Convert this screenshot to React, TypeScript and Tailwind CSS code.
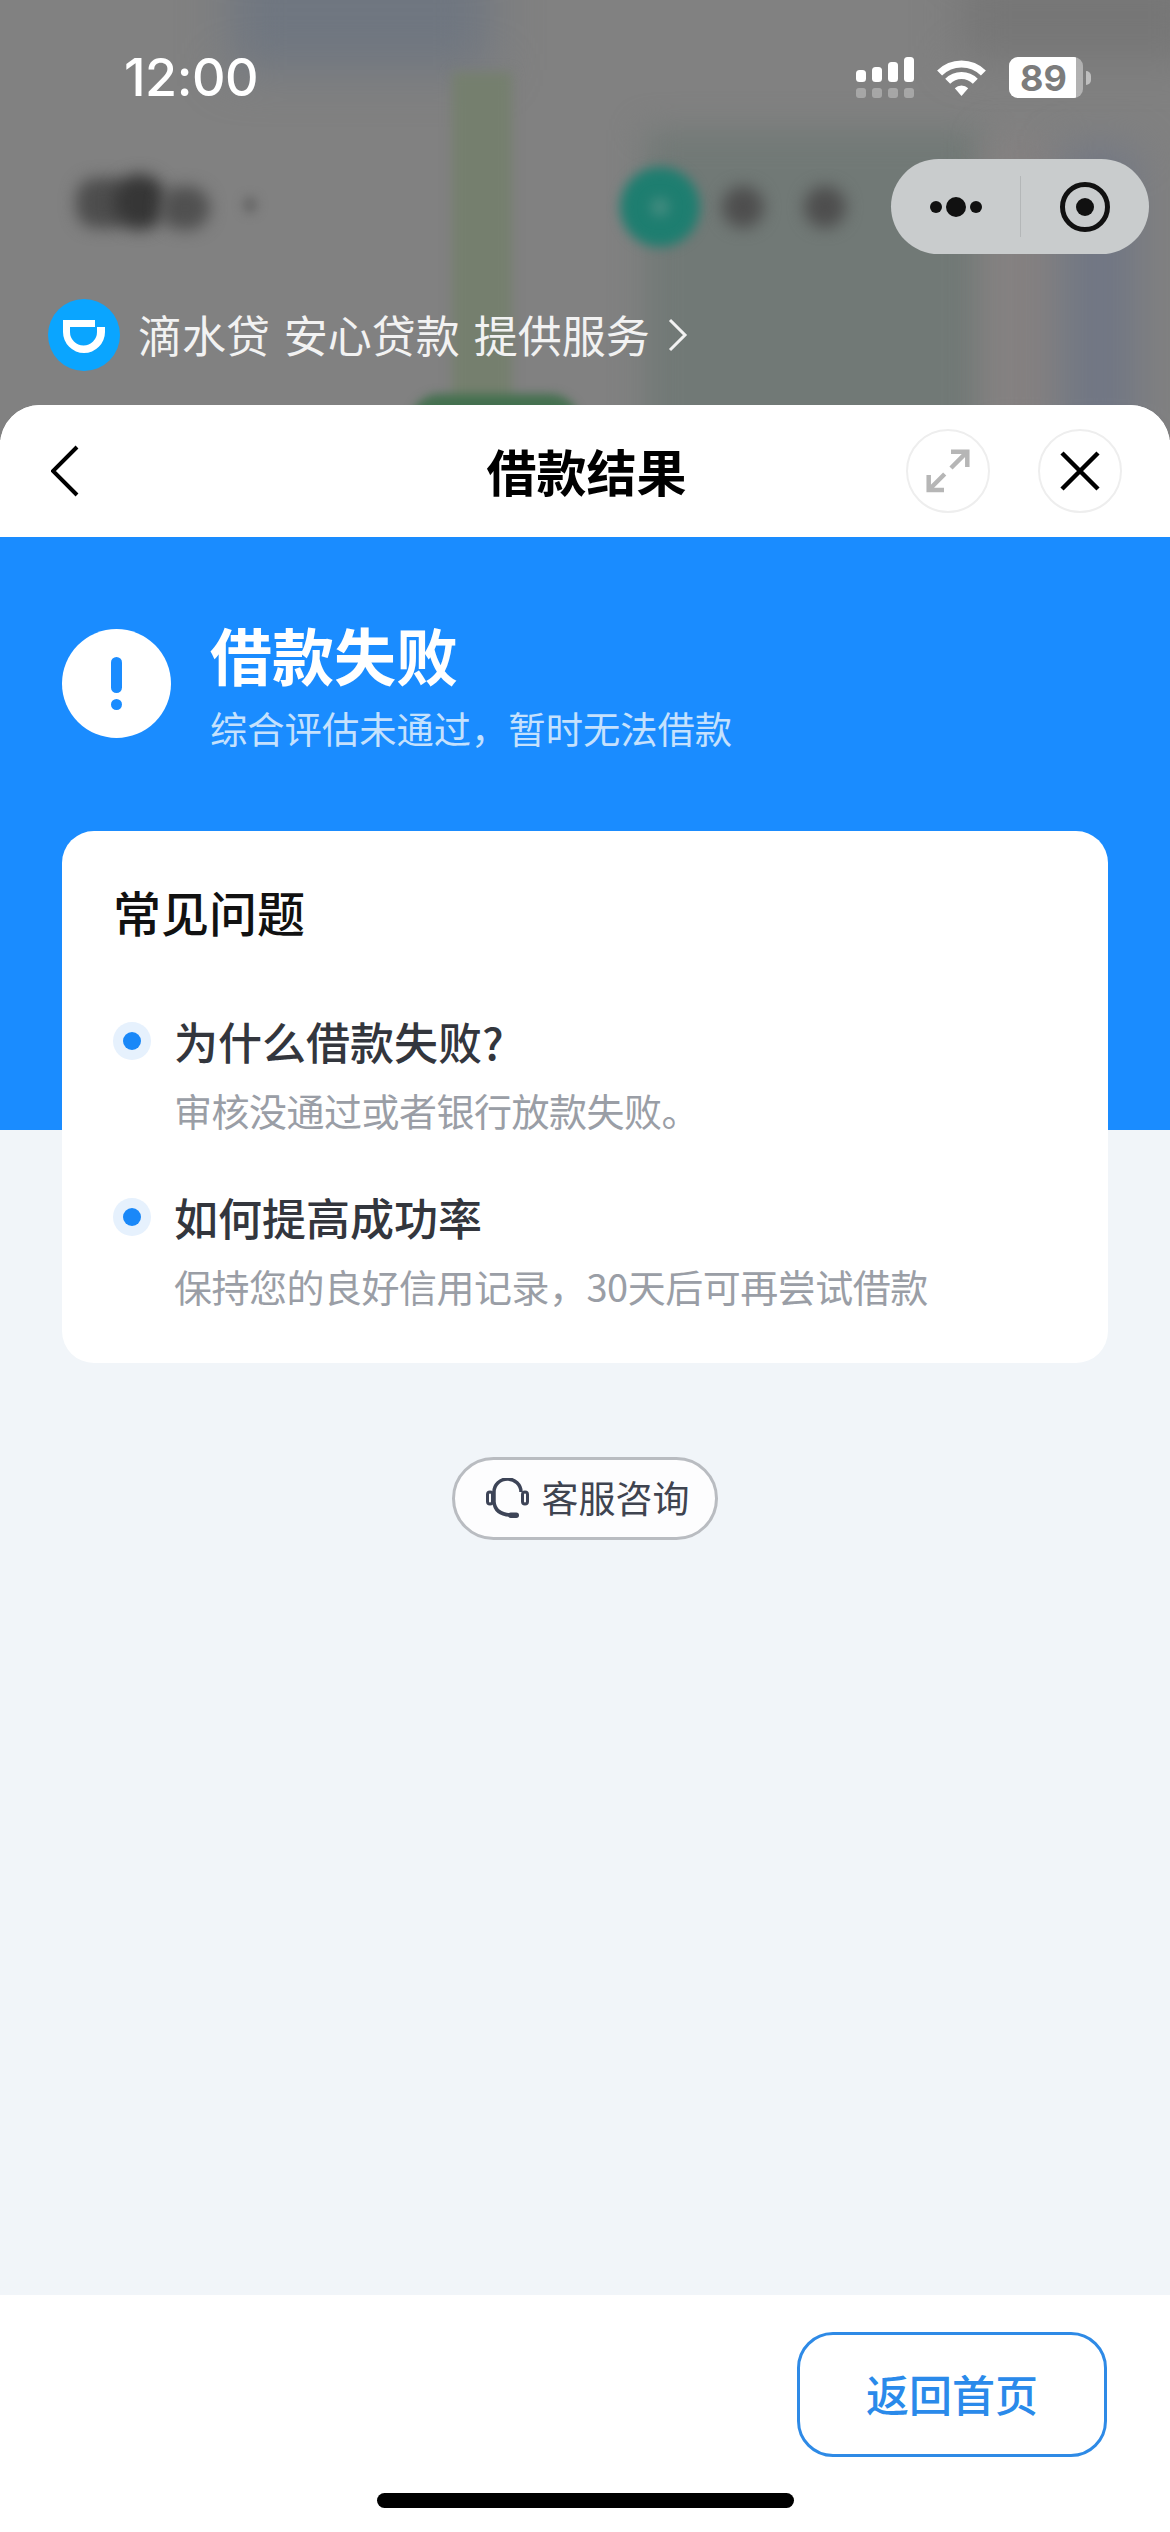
import React from 'react';

const cjk = "font-['Noto_Sans_CJK_SC','Noto_Sans',sans-serif]";

function MapBackdrop() {
  return (
    <div className="absolute inset-x-0 top-0 h-[440px] overflow-hidden bg-[#818181]">
      <div className="absolute left-[230px] top-[-50px] h-[120px] w-[260px] bg-[#6f7680] blur-[24px]" />
      <div className="absolute left-[645px] top-[130px] h-[320px] w-[335px] bg-[#717976] blur-[16px]" />
      <div className="absolute left-[990px] top-[140px] h-[300px] w-[60px] bg-[#858181] blur-[18px]" />
      <div className="absolute left-[1065px] top-[150px] h-[300px] w-[70px] bg-[#707684] blur-[22px]" />
      <div className="absolute left-[960px] top-[-30px] h-[90px] w-[240px] bg-[#767676] blur-[22px]" />
      <div className="absolute left-[452px] top-[72px] h-[350px] w-[60px] bg-[#757f6e] blur-[6px]" />
      <div className="absolute left-[410px] top-[394px] h-[40px] w-[170px] rounded-t-[30px] bg-[#44704f] blur-[5px]" />
      <div className="absolute left-[620px] top-[167px] h-[80px] w-[80px] rounded-full bg-[#1e7e70] blur-[6px]" />
      <div className="absolute left-[650px] top-[197px] h-[20px] w-[20px] rounded-full bg-[#3f8a7e] blur-[6px]" />
      <div className="absolute left-[76px] top-[178px] h-[50px] w-[56px] rounded-[20px] bg-[#4d4d4d] blur-[8px]" />
      <div className="absolute left-[114px] top-[174px] h-[56px] w-[52px] rounded-full bg-[#363636] blur-[8px]" />
      <div className="absolute left-[160px] top-[186px] h-[44px] w-[50px] rounded-full bg-[#505050] blur-[8px]" />
      <div className="absolute left-[242px] top-[196px] h-[18px] w-[16px] rounded-full bg-[#6c6c6c] blur-[5px]" />
      <div className="absolute left-[722px] top-[186px] h-[42px] w-[42px] rounded-full bg-[#4e4e4e] blur-[8px]" />
      <div className="absolute left-[804px] top-[186px] h-[42px] w-[42px] rounded-full bg-[#4e4e4e] blur-[8px]" />
    </div>
  );
}

function StatusBar() {
  return (
    <div className="flex h-[41px] items-center justify-between pl-[124px] pr-[79px] text-white">
      <span className="font-['Inter',sans-serif] text-[52px] font-medium leading-none tracking-[-0.5px]">12:00</span>
      <div className="flex items-start gap-[22px]">
        <svg width="58" height="41" viewBox="0 0 58 41" fill="white">
          <rect x="0" y="13" width="10" height="12" rx="3.5" />
          <rect x="16" y="10" width="10" height="15" rx="3.5" />
          <rect x="32" y="5" width="10" height="20" rx="3.5" />
          <rect x="48" y="0" width="10" height="25" rx="3.5" />
          <g opacity="0.3">
            <rect x="0" y="31" width="10" height="10" rx="3" />
            <rect x="16" y="31" width="10" height="10" rx="3" />
            <rect x="32" y="31" width="10" height="10" rx="3" />
            <rect x="48" y="31" width="10" height="10" rx="3" />
          </g>
        </svg>
        <svg width="51" height="38" viewBox="0 0 51 38" className="mt-[2px]" fill="none" stroke="white" strokeWidth="7">
          <path d="M3.6 14.1A31 31 0 0 1 47.4 14.1" />
          <path d="M11.7 22.2A19.5 19.5 0 0 1 39.3 22.2" />
          <path d="M25.5 37L18.8 29.3A9.5 9.5 0 0 1 32.2 29.3Z" fill="white" stroke="none" />
        </svg>
        <div className="flex items-center gap-[3px]">
          <div className="flex h-[41px] w-[74px] overflow-hidden rounded-[9px] bg-white/40">
            <div className="flex w-[67px] items-center justify-center bg-white pl-[2px] font-['Inter',sans-serif] text-[36px] font-bold leading-none text-[#7c7c7c]">
              89
            </div>
          </div>
          <div className="h-[14px] w-[5px] rounded-r-full bg-white/50" />
        </div>
      </div>
    </div>
  );
}

function Capsule() {
  return (
    <div className="mr-[21px] mt-[61px] flex h-[95px] w-[258px] items-center self-end rounded-full bg-[#c9cccd]">
      <div className="flex w-[129px] items-center justify-center gap-[4px] pl-[1px]">
        <div className="h-[12px] w-[12px] rounded-full bg-[#111111]" />
        <div className="h-[20px] w-[20px] rounded-full bg-[#111111]" />
        <div className="h-[12px] w-[12px] rounded-full bg-[#111111]" />
      </div>
      <div className="h-[61px] w-[1px] bg-[#b4b7b8]" />
      <div className="flex flex-1 items-center justify-center pr-[1px]">
        <div className="flex h-[50px] w-[50px] items-center justify-center rounded-full border-[5px] border-[#111111]">
          <div className="h-[18px] w-[18px] rounded-full bg-[#111111]" />
        </div>
      </div>
    </div>
  );
}

function SourceRow() {
  return (
    <div className="ml-[48px] mt-[45px] flex h-[72px] items-center">
      <div className="flex h-[72px] w-[72px] items-center justify-center rounded-full bg-[#0aa5ff]">
        <svg width="42" height="33" viewBox="0 0 42 33" fill="white" fillRule="evenodd" className="mt-[2px]">
          <path d="M0 0H32V7H42V12A21 21 0 0 1 0 12ZM7 7V12A13.5 13.5 0 0 0 34 12V7Z" />
        </svg>
      </div>
      <span className={`${cjk} ml-[18px] mb-[2px] whitespace-pre text-[44px] leading-none text-[#f2f2f2] [word-spacing:4px]`}>滴水贷 安心贷款 提供服务</span>
      <svg width="20" height="34" viewBox="0 0 20 34" fill="none" className="ml-[18px]" stroke="#f2f2f2" strokeWidth="3">
        <path d="M2 2L17 17L2 32" />
      </svg>
    </div>
  );
}

function SheetHeader() {
  return (
    <div className="grid h-[132px] grid-cols-[1fr_auto_1fr] items-center bg-white pl-[51px] pr-[48px]">
      <svg width="28" height="52" viewBox="0 0 28 52" fill="none" stroke="black" strokeWidth="4">
        <path d="M26 2L2 26L26 50" />
      </svg>
      <span className={`${cjk} mb-[2px] text-center text-[50px] font-bold leading-none text-black`}>借款结果</span>
      <div className="flex justify-end gap-[48px]">
        <div className="h-[84px] w-[84px] rounded-full border-2 border-[#eeeeee]">
          <svg width="80" height="80" viewBox="2 2 80 80" fill="none" stroke="#b6b6b6" strokeWidth="4.5">
            <path d="M45 22.7H61.3V38M61.3 22.7L45 39" />
            <path d="M22.7 46V61H38M22.7 61L38.7 45" />
          </svg>
        </div>
        <div className="h-[84px] w-[84px] rounded-full border-2 border-[#eeeeee]">
          <svg width="80" height="80" viewBox="2 2 80 80" fill="none" stroke="black" strokeWidth="4.5">
            <path d="M24 24L60 60M60 24L24 60" />
          </svg>
        </div>
      </div>
    </div>
  );
}

function FaqItem({ question, answer }: { question: string; answer: string }) {
  return (
    <div className="flex flex-col">
      <div className="flex h-[50px] items-center">
        <div className="flex h-[38px] w-[38px] items-center justify-center rounded-full bg-[#e6f1fd]">
          <div className="h-[18px] w-[18px] rounded-full bg-[#1a88f8]" />
        </div>
        <span className={`${cjk} ml-[23px] text-[44px] font-medium leading-[50px] text-[#33363d]`}>{question}</span>
      </div>
      <div className={`${cjk} ml-[61px] mt-[24px] text-[38px] leading-[40px] tracking-[-0.5px] text-[#9a9ea6]`}>{answer}</div>
    </div>
  );
}

export default function App() {
  return (
    <div className="relative flex h-[2532px] w-[1170px] flex-col overflow-hidden">
      <MapBackdrop />
      <div className="relative flex h-[405px] flex-col pt-[57px]">
        <StatusBar />
        <Capsule />
        <SourceRow />
      </div>
      <div className="relative flex flex-1 flex-col overflow-hidden rounded-t-[40px] bg-white">
        <SheetHeader />
        <main className="flex flex-1 flex-col bg-[linear-gradient(#1a8cff_593px,#f1f5f9_593px)] px-[62px] pt-[92px]">
          <div className="flex h-[109px] items-center">
            <div className="flex h-[109px] w-[109px] flex-col items-center justify-center rounded-full bg-white">
              <div className="h-[36px] w-[11px] rounded-full bg-[#1a8cff]" />
              <div className="mt-[6px] h-[11px] w-[11px] rounded-full bg-[#1a8cff]" />
            </div>
            <div className="ml-[39px] flex flex-col">
              <span className={`${cjk} text-[62px] font-bold leading-[70px] text-white`}>借款失败</span>
              <span className={`${cjk} mt-[18px] text-[37.3px] leading-[42px] text-[#c5e1fd]`}>综合评估未通过，暂时无法借款</span>
            </div>
          </div>
          <section className="mt-[93px] flex h-[532px] flex-col rounded-[32px] bg-white px-[51px] pt-[53px]">
            <h2 className={`${cjk} text-[48px] font-medium leading-[54px] text-[#111111]`}>常见问题</h2>
            <div className="mt-[78px]">
              <FaqItem question="为什么借款失败?" answer="审核没通过或者银行放款失败。" />
            </div>
            <div className="mt-[62px]">
              <FaqItem question="如何提高成功率" answer="保持您的良好信用记录，30天后可再尝试借款" />
            </div>
          </section>
          <button className="mt-[94px] flex h-[83px] w-[266px] items-center justify-center gap-[13px] self-center rounded-full border-[3px] border-[#b9bcc1] bg-[#fdfdfe] pl-[5px]">
            <svg width="43" height="41" viewBox="0 0 43 41" fill="none" stroke="#3d4457">
              <path d="M8 14A13.5 13 0 0 1 35 14" strokeWidth="3.5" />
              <path d="M8 14V24Q9 36 24 37" strokeWidth="3.5" />
              <rect x="1.5" y="14" width="5" height="12" rx="2.5" strokeWidth="3" />
              <rect x="36.5" y="14" width="5" height="12" rx="2.5" strokeWidth="3" />
              <rect x="22" y="34.5" width="11" height="5.5" rx="2.75" fill="#3d4457" strokeWidth="0" />
            </svg>
            <span className={`${cjk} mb-[2px] text-[37px] leading-none text-[#3f4450]`}>客服咨询</span>
          </button>
        </main>
        <footer className="flex h-[237px] flex-col bg-white pt-[37px]">
          <button className={`${cjk} mr-[63px] flex h-[125px] w-[310px] items-center justify-center self-end rounded-[36px] border-[3px] border-[#2e8ae6] bg-white text-[43px] font-medium leading-none text-[#2a8aea]`}>
            <span className="mb-[2px]">返回首页</span>
          </button>
          <div className="mt-[36px] h-[15px] w-[417px] self-center rounded-full bg-black" />
        </footer>
      </div>
    </div>
  );
}
